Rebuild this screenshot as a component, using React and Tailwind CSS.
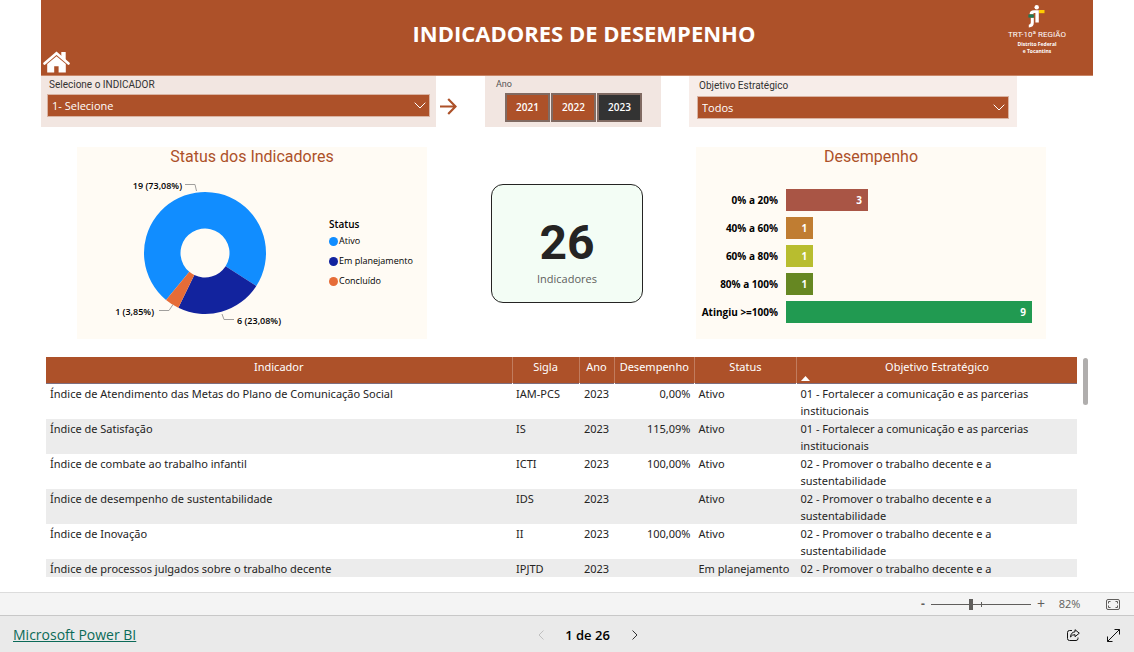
import { useState } from 'react';

const SEGOE = "font-['Open_Sans','Noto_Sans',sans-serif]";

const YEARS = ['2021', '2022', '2023'];

const STATUS = [
  { label: 'Ativo', color: '#118dff', start: 219.7, end: 482.8 },
  { label: 'Em planejamento', color: '#12239e', start: 122.8, end: 205.9 },
  { label: 'Concluído', color: '#e66c37', start: 205.9, end: 219.7 },
];

const BARS = [
  { label: '0% a 20%', value: 3, color: '#a95545' },
  { label: '40% a 60%', value: 1, color: '#c07d32' },
  { label: '60% a 80%', value: 1, color: '#b8bd2f' },
  { label: '80% a 100%', value: 1, color: '#668722' },
  { label: 'Atingiu >=100%', value: 9, color: '#219a51' },
];

const ROWS = [
  ['Índice de Atendimento das Metas do Plano de Comunicação Social', 'IAM-PCS', '2023', '0,00%', 'Ativo', '01 - Fortalecer a comunicação e as parcerias', 'institucionais'],
  ['Índice de Satisfação', 'IS', '2023', '115,09%', 'Ativo', '01 - Fortalecer a comunicação e as parcerias', 'institucionais'],
  ['Índice de combate ao trabalho infantil', 'ICTI', '2023', '100,00%', 'Ativo', '02 - Promover o trabalho decente e a', 'sustentabilidade'],
  ['Índice de desempenho de sustentabilidade', 'IDS', '2023', '', 'Ativo', '02 - Promover o trabalho decente e a', 'sustentabilidade'],
  ['Índice de Inovação', 'II', '2023', '100,00%', 'Ativo', '02 - Promover o trabalho decente e a', 'sustentabilidade'],
  ['Índice de processos julgados sobre o trabalho decente', 'IPJTD', '2023', '', 'Em planejamento', '02 - Promover o trabalho decente e a', ''],
];

function slicePath({ start, end }) {
  const cx = 128;
  const cy = 83;
  const point = (deg, r) => {
    const a = (deg * Math.PI) / 180;
    return `${cx + r * Math.sin(a)} ${cy - r * Math.cos(a)}`;
  };
  const large = end - start > 180 ? 1 : 0;
  return `M${point(start, 61)}A61 61 0 ${large} 1 ${point(end, 61)}L${point(end, 24.5)}A24.5 24.5 0 ${large} 0 ${point(start, 24.5)}Z`;
}

function Header() {
  return (
    <header className="grid h-[76px] grid-cols-[60px_minmax(0,1fr)_26px] border-b border-[#c98667] bg-[#ad5129] text-white">
      <a href="#inicio" aria-label="Início" className="self-end pb-px pl-[2px]">
        <svg width="27" height="23" viewBox="0 0 27 23" fill="none">
          <path d="M1.5 12.5 13.5 2.2l12 10.3" stroke="#fff" strokeWidth="2.6" strokeLinecap="round" />
          <path d="M18.3 1h4.4v8.5l-4.4-3.8z" fill="#fff" />
          <path d="M4.2 13 13.5 5.2 22.8 13v8.6h-7.2v-6.4h-4.4v6.4h-7z" fill="#fff" />
        </svg>
      </a>
      <div className="grid grid-cols-[minmax(0,1fr)_60px]">
        <h1 className="self-center pb-[10px] pl-[60px] text-center text-[22px] leading-7 font-bold">INDICADORES DE DESEMPENHO</h1>
        <div className="flex flex-col items-center pt-[5px] whitespace-nowrap">
          <svg width="18" height="24" viewBox="0 0 18 24" fill="none">
            <circle cx="8.7" cy="2.2" r="2.2" fill="#fff" />
            <path d="M1.600 9.200Q1.700 5.200 6 5.200h4.800v12.300H7.400V8H5.500v1.200z" fill="#fff" />
            <path d="M2.800 12.800h3v5q0 4.400-5 4.800v-2.800q2-.2 2-2.200z" fill="#fff" />
            <path d="M.4 9.400h5.400v3.200H.4z" fill="#1c7a58" />
            <path d="M11 5h5.500v3.200H11z" fill="#fc0" />
          </svg>
          <p className="font-['Roboto',sans-serif] text-[8px] leading-3">TRT-10ª REGIÃO</p>
          <p className="text-center text-[5px] leading-[7px] font-bold">
            Distrito Federal
            <br />e Tocantins
          </p>
        </div>
      </div>
    </header>
  );
}

function Dropdown({ id, value }) {
  return (
    <div className="relative">
      <select
        id={id}
        className="block h-[23px] w-full appearance-none border border-[#d9b3a2] bg-[#ad5129] pt-px pl-1 text-[11px] leading-5 text-white"
      >
        <option>{value}</option>
      </select>
      <svg className="pointer-events-none absolute top-2 right-1" width="12" height="7" viewBox="0 0 12 7" fill="none">
        <path d="M.7.7 6 6 11.300.7" stroke="#fff" />
      </svg>
    </div>
  );
}

function Filters() {
  const [year, setYear] = useState('2023');
  return (
    <section className="grid grid-cols-[395fr_49fr_176fr_28fr_328fr_76fr]">
      <div className="h-[51px] bg-[#f2e6e1] pr-[6px] pl-[6px]">
        <label htmlFor="indicador" className="block pl-[2px] font-['Roboto',sans-serif] text-[10px] leading-[18px] text-[#333]">
          Selecione o INDICADOR
        </label>
        <Dropdown id="indicador" value="1- Selecione" />
      </div>
      <button aria-label="Avançar" className="ml-1 self-center justify-self-start pt-[10px]">
        <svg width="17" height="17" viewBox="0 0 17 17" fill="none" stroke="#ad5129" strokeWidth="2.2">
          <path d="M0 8.500h15.500M8.200 1l7.300 7.500L8.200 16" />
        </svg>
      </button>
      <div className="bg-[#f2e6e1]">
        <p className="pl-[11px] font-['Roboto',sans-serif] text-[9px] leading-[17px] text-[#555]">Ano</p>
        <div className="flex gap-px pr-[19px] pl-5">
          {YEARS.map((y) => (
            <button
              key={y}
              onClick={() => setYear(y)}
              className={`h-[29px] flex-1 border-2 border-[#806a62] text-[10px] font-semibold text-white ${y === year ? 'bg-[#333]' : 'bg-[#ad5129]'}`}
            >
              {y}
            </button>
          ))}
        </div>
      </div>
      <div />
      <div className="bg-[#f7ede9] pr-2 pl-2">
        <label htmlFor="objetivo" className="block pl-[2px] font-['Roboto',sans-serif] text-[10px] leading-5 text-[#333]">
          Objetivo Estratégico
        </label>
        <Dropdown id="objetivo" value="Todos" />
      </div>
    </section>
  );
}

function PanelTitle({ children }) {
  return <h2 className="text-center font-['Roboto',sans-serif] text-[16px] leading-5 text-[#ad5129]">{children}</h2>;
}

function StatusPanel() {
  return (
    <section className="h-[192px] bg-[#fffbf4]">
      <PanelTitle>Status dos Indicadores</PanelTitle>
      <div className="flex pt-[3px]">
        <svg width="240" height="165" viewBox="0 0 240 165" className="shrink-0">
          {STATUS.map((s) => (
            <path key={s.label} d={slicePath(s)} fill={s.color} />
          ))}
          <g fill="none" stroke="#a19f9d">
            <path d="M108 14.500h10l1.500 6.500" />
            <path d="M82 140.500h10l4-6" />
            <path d="M145 144l2 5.500h10" />
          </g>
          <g fontSize="9" fontWeight="600" fill="#000">
            <text x="105" y="19" textAnchor="end">19 (73,08%)</text>
            <text x="77" y="145" textAnchor="end">1 (3,85%)</text>
            <text x="160" y="154">6 (23,08%)</text>
          </g>
        </svg>
        <div className="pt-[48px] pl-3 whitespace-nowrap text-black">
          <p className="text-[10px] leading-[13px] font-semibold">Status</p>
          <ul className="text-[9px]">
            {STATUS.map((s) => (
              <li key={s.label} className="flex items-center gap-px leading-5">
                <span className="size-[9px] rounded-full" style={{ background: s.color }} />
                {s.label}
              </li>
            ))}
          </ul>
        </div>
      </div>
    </section>
  );
}

function DesempenhoPanel() {
  return (
    <section className="h-[192px] bg-[#fffbf4]">
      <PanelTitle>Desempenho</PanelTitle>
      <ul className="flex flex-col gap-[6px] pt-[22px] pr-[14px] text-[10px] font-bold">
        {BARS.map((b) => (
          <li key={b.label} className="grid h-[22px] grid-cols-[82px_minmax(0,1fr)] items-center gap-2">
            <span className="text-right whitespace-nowrap text-black">{b.label}</span>
            <div
              className="flex h-full items-center justify-end pr-[6px] text-white"
              style={{ background: b.color, width: `${(b.value / 9) * 100}%` }}
            >
              {b.value}
            </div>
          </li>
        ))}
      </ul>
    </section>
  );
}

function IndicatorTable() {
  const cell = 'px-1 pt-px align-top';
  const line = 'border-l border-white/25';
  return (
    <section className="flex items-start gap-[6px] pt-[18px] pr-[5px] pl-[5px]">
      <table className="w-full table-fixed border-collapse font-['Noto_Sans','Open_Sans',sans-serif] text-[11px] leading-[17px] text-[#252423]">
        <colgroup>
          <col className="w-[45.2%]" />
          <col className="w-[6.5%]" />
          <col className="w-[3.4%]" />
          <col className="w-[7.8%]" />
          <col className="w-[9.9%]" />
          <col />
        </colgroup>
        <thead>
          <tr className="h-[26px] border-b border-[#7d6f80] bg-[#ad5129] text-white *:pt-px *:align-top *:font-normal">
            <th>Indicador</th>
            <th className={line}>Sigla</th>
            <th className={line}>Ano</th>
            <th className={line}>Desempenho</th>
            <th className={line}>Status</th>
            <th className={`relative ${line}`} aria-sort="ascending">
              Objetivo Estratégico
              <svg className="absolute bottom-[2px] left-1" width="9" height="5" viewBox="0 0 9 5">
                <path d="M4.500 0 9 5H0z" fill="#fff" />
              </svg>
            </th>
          </tr>
        </thead>
        <tbody>
          {ROWS.map(([nome, sigla, ano, desempenho, status, objetivo, resto]) => (
            <tr key={sigla} className="even:bg-[#ececec]">
              <td className={cell}>{nome}</td>
              <td className={cell}>{sigla}</td>
              <td className="pt-px text-center align-top">{ano}</td>
              <td className={`${cell} text-right`}>{desempenho}</td>
              <td className={`${cell} whitespace-nowrap`}>{status}</td>
              <td className={cell}>
                {objetivo}
                {resto && <br />}
                {resto}
              </td>
            </tr>
          ))}
        </tbody>
      </table>
      <div className="mt-px h-[47px] w-[5px] shrink-0 rounded-full bg-[#b0aead]" />
    </section>
  );
}

function ZoomBar() {
  const [zoom, setZoom] = useState(40);
  return (
    <div className="flex h-[23px] items-center justify-end border-t border-[#dcdcdc] bg-[#f4f4f4] pr-[14px] text-[12px] text-[#605e5c]">
      <button aria-label="Reduzir" className="w-4 leading-5 font-bold">-</button>
      <div className="relative flex h-4 w-[100px] items-center">
        <input
          type="range"
          aria-label="Zoom"
          value={zoom}
          onChange={(e) => setZoom(Number(e.target.value))}
          className="h-3 w-full appearance-none bg-transparent [&::-webkit-slider-runnable-track]:h-px [&::-webkit-slider-runnable-track]:bg-[#605e5c] [&::-webkit-slider-thumb]:-mt-[5px] [&::-webkit-slider-thumb]:h-[11px] [&::-webkit-slider-thumb]:w-1 [&::-webkit-slider-thumb]:appearance-none [&::-webkit-slider-thumb]:bg-[#605e5c]"
        />
        <span className="absolute left-1/2 h-[5px] w-px bg-[#605e5c]" />
      </div>
      <button aria-label="Ampliar" className="w-5 text-[14px] leading-5">+</button>
      <span className="w-[37px] text-center text-[11px]">82%</span>
      <button aria-label="Ajustar à página" className="ml-[18px]">
        <svg width="14" height="11" viewBox="0 0 14 11" fill="none" stroke="#605e5c">
          <rect x=".5" y=".5" width="13" height="10" rx="1.500" />
          <path d="M2.500 4.500v-2h2M9.500 2.500h2v2M11.500 6.500v2h-2M4.500 8.500h-2v-2" />
        </svg>
      </button>
    </div>
  );
}

function Footer() {
  return (
    <footer className="grid h-[37px] grid-cols-[1fr_auto_1fr] items-center border-t border-[#c8c8c8] bg-[#eaeaea] pt-[2px] pr-[14px] pl-[13px]">
      <a href="#powerbi" className="justify-self-start text-[14px] leading-5 text-[#0b6a58] underline">
        Microsoft Power BI
      </a>
      <nav className="flex items-center pl-[42px] text-black">
        <button aria-label="Página anterior" disabled>
          <svg width="6" height="10" viewBox="0 0 6 10" fill="none" stroke="#c0c0c0">
            <path d="M5.500.5 1 5l4.500 4.500" />
          </svg>
        </button>
        <span className="w-[88px] text-center text-[13px] leading-5 font-semibold">1 de 26</span>
        <button aria-label="Próxima página">
          <svg width="6" height="10" viewBox="0 0 6 10" fill="none" stroke="#333">
            <path d="M.5.5 5 5 .5 9.500" />
          </svg>
        </button>
      </nav>
      <div className="flex items-center gap-[27px] justify-self-end">
        <button aria-label="Compartilhar">
          <svg width="13" height="12" viewBox="0 0 13 12" fill="none" stroke="#111" strokeLinejoin="round">
            <path d="M5 1.500H2.500a2 2 0 0 0-2 2v6a2 2 0 0 0 2 2H9a2 2 0 0 0 2-2V8.500" />
            <path d="M8 .7 12.300 4.200 8 7.700V5.700Q5 5.500 3.500 8 3.800 3.300 8 2.800z" />
          </svg>
        </button>
        <button aria-label="Tela inteira">
          <svg width="13" height="13" viewBox="0 0 13 13" fill="none" stroke="#111">
            <path d="M.5 12.500l12-12M7.500.5h5v5M.5 7.500v5h5" />
          </svg>
        </button>
      </div>
    </footer>
  );
}

export default function App() {
  return (
    <div className={`flex min-h-screen flex-col bg-white ${SEGOE}`}>
      <main className="flex-1 px-[41px]">
        <Header />
        <Filters />
        <div className="grid grid-cols-[350fr_64fr_152fr_53fr_350fr] pt-5 pr-[47px] pl-9">
          <StatusPanel />
          <div />
          <section className="mt-[37px] h-[119px] rounded-[12px] border border-[#252423] bg-[#f3fdf5] pt-[34px] text-center">
            <p className="font-['Roboto',sans-serif] text-[48px] leading-[48px] font-bold text-[#252423]">26</p>
            <p className="text-[11px] leading-6 text-[#605e5c]">Indicadores</p>
          </section>
          <div />
          <DesempenhoPanel />
        </div>
        <IndicatorTable />
      </main>
      <ZoomBar />
      <Footer />
    </div>
  );
}
